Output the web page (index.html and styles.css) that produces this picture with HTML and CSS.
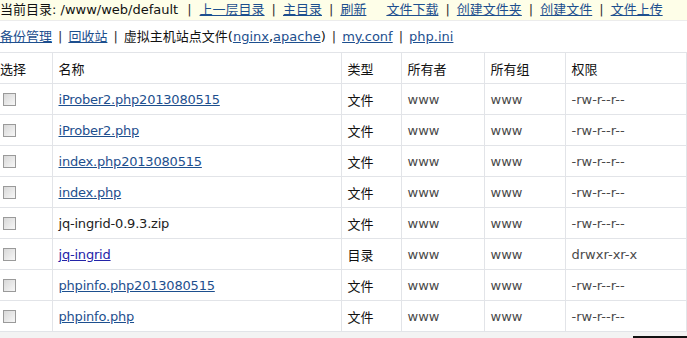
FILE: index.html
```html
<!DOCTYPE html>
<html lang="zh-CN">
<head>
    <meta charset="UTF-8">
    <title>文件管理</title>
    <link rel="stylesheet" href="styles.css">
</head>
<body>
    <div class="topbar">
        当前目录: /www/web/default<span class="sep lead">|</span><a href="#">上一层目录</a><span class="sep">|</span><a href="#">主目录</a><span class="sep">|</span><a href="#">刷新</a><span class="gap"></span><a href="#">文件下载</a><span class="sep">|</span><a href="#">创建文件夹</a><span class="sep">|</span><a href="#">创建文件</a><span class="sep">|</span><a href="#">文件上传</a>
    </div>
    <div class="toolbar">
        <a href="#">备份管理</a><span class="sep">|</span><a href="#">回收站</a><span class="sep">|</span>虚拟主机站点文件(<a href="#">nginx</a>,<a href="#">apache</a>)<span class="sep">|</span><a href="#">my.conf</a><span class="sep">|</span><a href="#">php.ini</a>
    </div>

    <table class="files">
        <colgroup>
            <col style="width:52px">
            <col style="width:289px">
            <col style="width:60px">
            <col style="width:83px">
            <col style="width:81px">
            <col>
        </colgroup>
        <tr class="head">
            <th class="first">选择</th>
            <th>名称</th>
            <th>类型</th>
            <th>所有者</th>
            <th>所有组</th>
            <th>权限</th>
        </tr>
        <tr>
            <td class="first"><input type="checkbox" class="chk"></td>
            <td><a href="#">iProber2.php2013080515</a></td>
            <td class="type">文件</td>
            <td class="meta">www</td>
            <td class="meta">www</td>
            <td class="meta">-rw-r--r--</td>
        </tr>
        <tr>
            <td class="first"><input type="checkbox" class="chk"></td>
            <td><a href="#">iProber2.php</a></td>
            <td class="type">文件</td>
            <td class="meta">www</td>
            <td class="meta">www</td>
            <td class="meta">-rw-r--r--</td>
        </tr>
        <tr>
            <td class="first"><input type="checkbox" class="chk"></td>
            <td><a href="#">index.php2013080515</a></td>
            <td class="type">文件</td>
            <td class="meta">www</td>
            <td class="meta">www</td>
            <td class="meta">-rw-r--r--</td>
        </tr>
        <tr>
            <td class="first"><input type="checkbox" class="chk"></td>
            <td><a href="#">index.php</a></td>
            <td class="type">文件</td>
            <td class="meta">www</td>
            <td class="meta">www</td>
            <td class="meta">-rw-r--r--</td>
        </tr>
        <tr>
            <td class="first"><input type="checkbox" class="chk"></td>
            <td class="plain">jq-ingrid-0.9.3.zip</td>
            <td class="type">文件</td>
            <td class="meta">www</td>
            <td class="meta">www</td>
            <td class="meta">-rw-r--r--</td>
        </tr>
        <tr>
            <td class="first"><input type="checkbox" class="chk"></td>
            <td><a href="#" class="dir">jq-ingrid</a></td>
            <td class="type">目录</td>
            <td class="meta">www</td>
            <td class="meta">www</td>
            <td class="meta">drwxr-xr-x</td>
        </tr>
        <tr>
            <td class="first"><input type="checkbox" class="chk"></td>
            <td><a href="#">phpinfo.php2013080515</a></td>
            <td class="type">文件</td>
            <td class="meta">www</td>
            <td class="meta">www</td>
            <td class="meta">-rw-r--r--</td>
        </tr>
        <tr>
            <td class="first"><input type="checkbox" class="chk"></td>
            <td><a href="#">phpinfo.php</a></td>
            <td class="type">文件</td>
            <td class="meta">www</td>
            <td class="meta">www</td>
            <td class="meta">-rw-r--r--</td>
        </tr>
    </table>

    <div class="footer"><span class="bar"></span></div>
</body>
</html>
```

FILE: styles.css
```css
body {
    margin: 0;
    font-family: "DejaVu Sans", "Noto Sans CJK SC", sans-serif;
    font-size: 13px;
    color: #111;
    background: #f3f3f3;
}
a {
    color: #1d4f8e;
    text-decoration: underline;
}
.topbar {
    height: 20px;
    line-height: 20px;
    background: #fefee8;
    border-bottom: 1px solid #ececec;
    white-space: nowrap;
    overflow: hidden;
}
.toolbar {
    height: 31px;
    line-height: 31px;
    background: #fff;
    white-space: nowrap;
}
.sep {
    color: #333;
    margin: 0 6px;
}
.topbar .sep {
    margin: 0 7px;
}
.topbar .sep.lead {
    margin-left: 9px;
    margin-right: 8px;
}
.gap {
    display: inline-block;
    width: 20px;
}
.files {
    width: 100%;
    border-collapse: collapse;
    background: #fff;
    table-layout: fixed;
}
.files th,
.files td {
    height: 30px;
    padding: 0 0 0 6px;
    border: 1px solid #e2e4e8;
    text-align: left;
    font-weight: normal;
    white-space: nowrap;
    overflow: hidden;
}
.files th {
    color: #111;
}
.files td a {
    letter-spacing: -0.2px;
}
.files .first {
    padding-left: 0;
    border-left: none;
}
.files .type {
    color: #111;
}
.files .meta {
    color: #4a4a4a;
}
.files .plain {
    color: #222;
    letter-spacing: -0.2px;
}
.files a.dir {
    color: #2424a8;
}
.chk {
    -webkit-appearance: none;
    appearance: none;
    display: block;
    width: 13px;
    height: 13px;
    margin: 0 0 0 3px;
    border: 1px solid #9a9a9a;
    background: linear-gradient(135deg, #d8d8d8, #f7f7f7);
    box-sizing: border-box;
}
.footer {
    height: 7px;
    display: flex;
    justify-content: flex-end;
    align-items: flex-end;
}
.footer .bar {
    width: 54px;
    height: 3px;
    background: #111;
}
```
